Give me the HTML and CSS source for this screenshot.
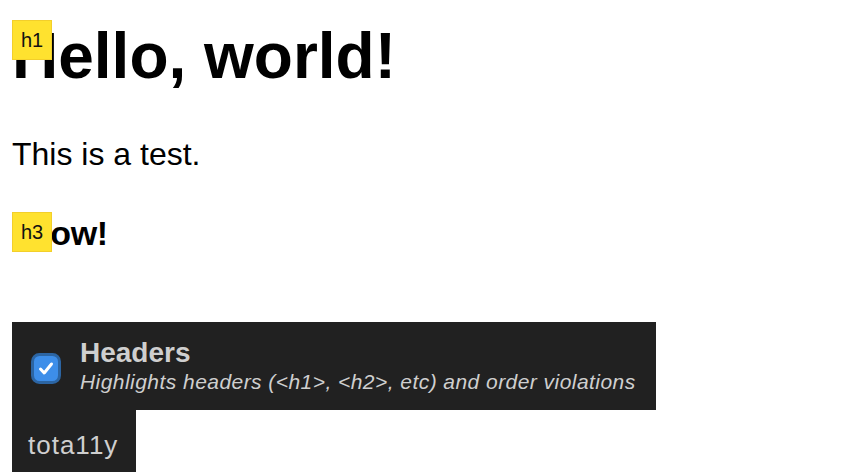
FILE: index.html
```html
<!DOCTYPE html>
<html>
<head>
<meta charset="utf-8">
<link rel="stylesheet" href="styles.css">
</head>
<body>
<main class="page">
  <h1 class="heading heading-1">Hello, world!<span class="badge">h1</span></h1>
  <p class="text">This is a test.</p>
  <h3 class="heading heading-3">Now!<span class="badge">h3</span></h3>
</main>
<section class="toolbar">
  <div class="panel">
    <label class="checkbox">
      <svg width="30" height="31" viewBox="0 0 30 31" aria-hidden="true">
        <rect x="1.5" y="1.5" width="27" height="28" rx="7" fill="#3d8ee9" stroke="#2c65a3" stroke-width="3"/>
        <path d="M9.5 16 L13.2 20 L20.5 11" fill="none" stroke="#fff" stroke-width="3" stroke-linecap="round" stroke-linejoin="round"/>
      </svg>
    </label>
    <div class="info">
      <div class="info-title">Headers</div>
      <div class="info-desc">Highlights headers (&lt;h1&gt;, &lt;h2&gt;, etc) and order violations</div>
    </div>
  </div>
  <div class="tab">tota11y</div>
</section>
</body>
</html>
```
FILE: styles.css
```css
html, body {
  margin: 0;
  padding: 0;
  background: #fff;
}
body {
  font-family: "Liberation Sans", Arial, sans-serif;
  color: #000;
  padding: 0 12px;
  overflow: hidden;
  height: 472px;
}
.page {
  display: flex;
  flex-direction: column;
  align-items: flex-start;
  padding-top: 20px;
}
.heading {
  position: relative;
  margin: 0;
  font-weight: bold;
}
.heading-1 {
  font-size: 64px;
  line-height: 72px;
}
.heading-3 {
  font-size: 34px;
  line-height: 42px;
  margin-top: 40px;
  padding-left: 14px;
  letter-spacing: -0.3px;
}
.text {
  margin: 44px 0 0;
  font-size: 32px;
  line-height: 36px;
}
.badge {
  position: absolute;
  left: 0;
  top: 0;
  width: 40px;
  height: 40px;
  box-sizing: border-box;
  background: #ffe22f;
  border: 1px solid #f3cf2b;
  color: #111;
  font-size: 20px;
  font-weight: normal;
  line-height: 38px;
  text-align: center;
  letter-spacing: 0;
}
.toolbar {
  margin-top: 68px;
  display: flex;
  flex-direction: column;
  align-items: flex-start;
}
.panel {
  width: 644px;
  height: 88px;
  box-sizing: border-box;
  background: #212121;
  display: flex;
  align-items: flex-start;
  padding: 17px 0 0 19px;
  gap: 19px;
}
.checkbox {
  display: flex;
  margin-top: 14px;
}
.info {
  display: flex;
  flex-direction: column;
  color: #cfcfcf;
}
.info-title {
  font-size: 28px;
  font-weight: bold;
  line-height: 28px;
}
.info-desc {
  font-size: 21px;
  font-style: italic;
  line-height: 28px;
  letter-spacing: 0.45px;
  margin-top: 1px;
}
.tab {
  background: #212121;
  color: #cfcfcf;
  font-size: 26px;
  line-height: 62px;
  height: 66px;
  width: 124px;
  box-sizing: border-box;
  padding: 4px 0 0 16px;
  letter-spacing: 1px;
}
```
